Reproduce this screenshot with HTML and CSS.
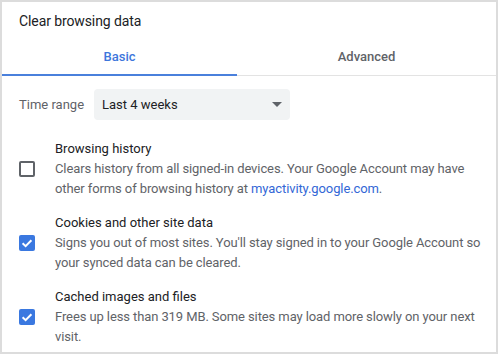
FILE: index.html
```html
<!DOCTYPE html>
<html>
<head>
<meta charset="utf-8">
<link rel="stylesheet" href="styles.css">
</head>
<body>
<div class="frame">
  <div class="title">Clear browsing data</div>
  <div class="tabs">
    <div class="tab tab-basic active">Basic</div>
    <div class="tab tab-adv">Advanced</div>
  </div>
  <div class="range-row">
    <span class="range-label">Time range</span>
    <div class="select">
      <span>Last 4 weeks</span>
      <span class="arrow"></span>
    </div>
  </div>
  <div class="items">
    <div class="item">
      <div class="cb"></div>
      <div class="text">
        <div class="item-title">Browsing history</div>
        <div class="item-desc">Clears history from all signed-in devices. Your Google Account may have other forms of browsing history at <span class="link">myactivity.google.com</span>.</div>
      </div>
    </div>
    <div class="item">
      <div class="cb checked"><svg viewBox="0 0 16 16" width="16" height="16"><path d="M3.6 8.2 L6.6 11.1 L12.4 5.2" fill="none" stroke="#fff" stroke-width="2"/></svg></div>
      <div class="text">
        <div class="item-title">Cookies and other site data</div>
        <div class="item-desc">Signs you out of most sites. You'll stay signed in to your Google Account so your synced data can be cleared.</div>
      </div>
    </div>
    <div class="item">
      <div class="cb checked"><svg viewBox="0 0 16 16" width="16" height="16"><path d="M3.6 8.2 L6.6 11.1 L12.4 5.2" fill="none" stroke="#fff" stroke-width="2"/></svg></div>
      <div class="text">
        <div class="item-title">Cached images and files</div>
        <div class="item-desc">Frees up less than 319 MB. Some sites may load more slowly on your next visit.</div>
      </div>
    </div>
  </div>
</div>
</body>
</html>
```
FILE: styles.css
```css
html, body {
  margin: 0;
  padding: 0;
  background: #fff;
}
body {
  font-family: Roboto, "Liberation Sans", sans-serif;
  color: #202124;
}
.frame {
  box-sizing: border-box;
  width: 498px;
  height: 354px;
  border: 2px solid #dcdcdc;
  overflow: hidden;
}
.title {
  font-size: 14px;
  letter-spacing: -0.1px;
  line-height: 20px;
  padding: 9px 0 0 17px;
  height: 26px;
}
.tabs {
  display: flex;
  height: 38px;
  border-bottom: 1px solid #e3e3e3;
}
.tab {
  position: relative;
  display: flex;
  align-items: center;
  justify-content: center;
  font-size: 13px;
  font-weight: 500;
  color: #5f6368;
}
.tab-basic {
  width: 235px;
}
.tab-adv {
  flex: 1;
}
.tab.active {
  color: #3d76dc;
}
.tab.active::after {
  content: "";
  position: absolute;
  left: 0;
  right: 0;
  bottom: -1px;
  height: 2px;
  background: #4a80dc;
}
.range-row {
  display: flex;
  align-items: center;
  margin-top: 13px;
  padding-left: 17px;
}
.range-label {
  font-size: 13px;
  color: #5f6368;
  width: 75px;
}
.select {
  display: flex;
  align-items: center;
  justify-content: space-between;
  box-sizing: border-box;
  width: 196px;
  height: 31px;
  padding: 0 8px 0 8px;
  background: #f1f3f4;
  border-radius: 4px;
  font-size: 13px;
  color: #202124;
}
.arrow {
  width: 0;
  height: 0;
  border-left: 5px solid transparent;
  border-right: 5px solid transparent;
  border-top: 5px solid #5f6368;
}
.items {
  display: flex;
  flex-direction: column;
  gap: 14px;
  margin-top: 19px;
  padding-left: 17px;
  padding-right: 6px;
}
.item {
  display: flex;
  align-items: center;
  gap: 20px;
}
.cb {
  box-sizing: border-box;
  flex: none;
  width: 16px;
  height: 16px;
  border: 2px solid #5f6368;
  border-radius: 2px;
}
.cb.checked {
  border: none;
  background: #3a78e0;
  display: flex;
}
.text {
  font-size: 13px;
  line-height: 20px;
}
.item-title {
  color: #202124;
}
.item-desc {
  color: #5f6368;
  letter-spacing: -0.1px;
}
.link {
  color: #3367d6;
}
```
